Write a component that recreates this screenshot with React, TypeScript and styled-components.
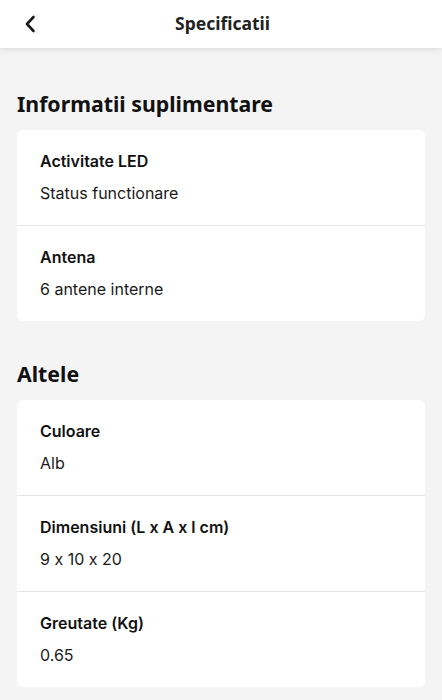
import * as React from 'react'
import styled, { createGlobalStyle } from 'styled-components'

type Spec = { label: string, value: string }
type Section = { title: string, items: Spec[] }

const sections: Section[] = [
  {
    title: 'Informatii suplimentare',
    items: [
      { label: 'Activitate LED', value: 'Status functionare' },
      { label: 'Antena', value: '6 antene interne' }
    ]
  },
  {
    title: 'Altele',
    items: [
      { label: 'Culoare', value: 'Alb' },
      { label: 'Dimensiuni (L x A x l cm)', value: '9 x 10 x 20' },
      { label: 'Greutate (Kg)', value: '0.65' }
    ]
  }
]

const GlobalStyle = createGlobalStyle`
  html, body {
    margin: 0;
    padding: 0;
    background: #f4f4f4;
  }
  body {
    font-family: Inter, "Noto Sans", "Liberation Sans", sans-serif;
    font-feature-settings: "calt" 0;
    color: #141414;
  }
`

const Page = styled.div`
  min-height: 700px;
  background: #f4f4f4;
  display: flex;
  flex-direction: column;
`

const Header = styled.header`
  height: 48px;
  background: #fff;
  box-shadow: 0 1px 6px rgba(0, 0, 0, 0.12);
  display: grid;
  grid-template-columns: 60px 1fr 60px;
  align-items: center;
  position: relative;
  z-index: 1;
`

const BackButton = styled.button`
  border: none;
  background: none;
  padding: 0;
  margin-left: 22px;
  width: 16px;
  height: 20px;
  display: flex;
  align-items: center;
  justify-content: center;
  color: #1a1a1a;
  cursor: pointer;
`

const HeaderTitle = styled.h1`
  margin: 0;
  text-align: center;
  font-family: "Noto Sans", "Open Sans", sans-serif;
  font-size: 17.5px;
  font-weight: 700;
  color: #222;
  padding-bottom: 3px;
  padding-left: 3px;
`

const Content = styled.main`
  padding: 42px 17px 0;
  display: flex;
  flex-direction: column;
`

const SectionBlock = styled.section`
  margin-bottom: 39px;
`

const SectionTitle = styled.h2`
  margin: 0 0 12px;
  font-family: "Noto Sans", "Open Sans", sans-serif;
  font-size: 21.3px;
  line-height: 28px;
  font-weight: 700;
  color: #111;
`

const Card = styled.div`
  background: #fff;
  border-radius: 6px;
  overflow: hidden;
`

const SpecRow = styled.div`
  padding: 20px 23px 21px;
  & + & {
    border-top: 1px solid #e6e6e6;
  }
`

const SpecLabel = styled.div`
  font-size: 16px;
  line-height: 22px;
  font-weight: 600;
  color: #111;
`

const SpecValue = styled.div`
  margin-top: 10px;
  font-size: 16px;
  line-height: 22px;
  font-weight: 400;
  color: #1a1a1a;
`

const ChevronLeft = () =>
  <svg width="12" height="18" viewBox="0 0 12 18" fill="none">
    <path d="M9.5 2 L3 9 L9.5 16" stroke="currentColor" strokeWidth="2.6"
      strokeLinecap="round" strokeLinejoin="round" />
  </svg>

export default function App() {
  return <Page>
    <GlobalStyle />
    <Header>
      <BackButton aria-label="Inapoi"><ChevronLeft /></BackButton>
      <HeaderTitle>Specificatii</HeaderTitle>
      <span />
    </Header>
    <Content>
      {sections.map(section =>
        <SectionBlock key={section.title}>
          <SectionTitle>{section.title}</SectionTitle>
          <Card>
            {section.items.map(item =>
              <SpecRow key={item.label}>
                <SpecLabel>{item.label}</SpecLabel>
                <SpecValue>{item.value}</SpecValue>
              </SpecRow>)}
          </Card>
        </SectionBlock>)}
    </Content>
  </Page>
}
